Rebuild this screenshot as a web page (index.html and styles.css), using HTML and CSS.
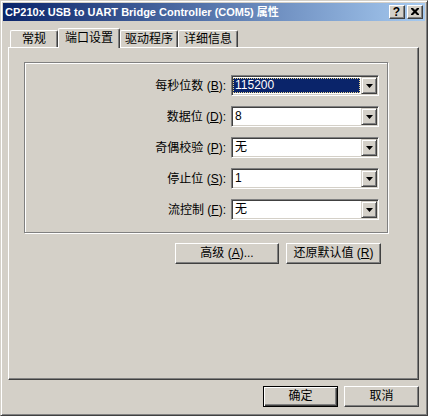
FILE: index.html
```html
<!DOCTYPE html>
<html>
<head>
<meta charset="utf-8">
<link rel="stylesheet" href="styles.css">
</head>
<body>
<div class="window">
  <div class="titlebar">
    <span class="title">CP210x USB to UART Bridge Controller (COM5) 属性</span>
    <div class="caption-btns">
      <span class="cap-btn help">?</span>
      <span class="cap-btn close"><svg width="8" height="7" viewBox="0 0 8 7"><path d="M0 0h2l2 2 2-2h2v1l-2.5 2.5L8 6v1H6L4 5 2 7H0V6l2.5-2.5L0 1z" fill="#000"/></svg></span>
    </div>
  </div>
  <div class="client">
    <div class="tabs">
      <div class="tab t1">常规</div>
      <div class="tab active t2">端口设置</div>
      <div class="tab t3">驱动程序</div>
      <div class="tab t4">详细信息</div>
    </div>
    <div class="panel">
      <div class="group">
        <label class="lbl">每秒位数 (<u>B</u>):</label>
        <div class="combo"><span class="val sel"><span class="focus">115200</span></span><span class="drop"><svg width="7" height="4" viewBox="0 0 7 4"><path d="M0 0h7L3.5 4z" fill="#000"/></svg></span></div>
        <label class="lbl">数据位 (<u>D</u>):</label>
        <div class="combo"><span class="val">8</span><span class="drop"><svg width="7" height="4" viewBox="0 0 7 4"><path d="M0 0h7L3.5 4z" fill="#000"/></svg></span></div>
        <label class="lbl">奇偶校验 (<u>P</u>):</label>
        <div class="combo"><span class="val">无</span><span class="drop"><svg width="7" height="4" viewBox="0 0 7 4"><path d="M0 0h7L3.5 4z" fill="#000"/></svg></span></div>
        <label class="lbl">停止位 (<u>S</u>):</label>
        <div class="combo"><span class="val">1</span><span class="drop"><svg width="7" height="4" viewBox="0 0 7 4"><path d="M0 0h7L3.5 4z" fill="#000"/></svg></span></div>
        <label class="lbl">流控制 (<u>F</u>):</label>
        <div class="combo"><span class="val">无</span><span class="drop"><svg width="7" height="4" viewBox="0 0 7 4"><path d="M0 0h7L3.5 4z" fill="#000"/></svg></span></div>
      </div>
      <div class="panel-btns">
        <button class="btn adv">高级 (<u>A</u>)...</button>
        <button class="btn restore">还原默认值 (<u>R</u>)</button>
      </div>
    </div>
    <div class="dialog-btns">
      <button class="btn default">确定</button>
      <button class="btn">取消</button>
    </div>
  </div>
</div>
</body>
</html>
```
FILE: styles.css
```css
* { box-sizing: border-box; }
html, body { margin: 0; padding: 0; }
body {
  width: 428px;
  height: 416px;
  background: #d4d0c8;
  font-family: "Liberation Sans", "Noto Sans CJK SC", sans-serif;
  font-size: 12px;
  color: #000;
}
.window {
  width: 428px;
  height: 416px;
  background: #d4d0c8;
  border: 1px solid;
  border-color: #d4d0c8 #404040 #404040 #d4d0c8;
  box-shadow: inset 1px 1px 0 #fff, inset -1px -1px 0 #808080;
  padding: 2px;
  display: flex;
  flex-direction: column;
}
.titlebar {
  height: 18px;
  flex: none;
  background: linear-gradient(to right, #0a246a, #a6caf0);
  display: flex;
  align-items: center;
  padding: 0 2px 0 2px;
}
.title {
  flex: 1;
  color: #fff;
  font-weight: bold;
  font-size: 11px;
  font-family: "Liberation Sans", "Noto Sans CJK SC", sans-serif;
  white-space: nowrap;
  overflow: hidden;
  line-height: 18px;
}
.caption-btns {
  display: flex;
  gap: 2px;
}
.cap-btn {
  width: 16px;
  height: 14px;
  background: #d4d0c8;
  border: 1px solid;
  border-color: #fff #404040 #404040 #fff;
  box-shadow: inset -1px -1px 0 #808080;
  display: flex;
  align-items: center;
  justify-content: center;
}
.cap-btn.help {
  font-weight: bold;
  font-size: 12px;
  line-height: 12px;
  font-family: "Liberation Sans", sans-serif;
  padding-right: 1px;
}
.cap-btn.close svg { margin-right: 1px; margin-bottom: 1px; }
.client {
  flex: 1;
  display: flex;
  flex-direction: column;
  padding: 7px 6px 0 5px;
}
.tabs {
  display: flex;
  align-items: flex-end;
  padding-left: 2px;
  height: 19px;
  flex: none;
}
.tab {
  height: 17px;
  background: #d4d0c8;
  border-top: 1px solid #fff;
  border-left: 1px solid #fff;
  border-right: 1px solid #404040;
  border-top-left-radius: 2px;
  border-top-right-radius: 2px;
  box-shadow: inset -1px 0 0 #808080;
  display: flex;
  justify-content: center;
  padding-top: 2px;
  line-height: 13px;
  white-space: nowrap;
}
.t1 { width: 48px; }
.t2 { width: 62px; }
.t3 { width: 58px; }
.t4 { width: 60px; }
.tab.active {
  height: 20px;
  margin-bottom: -1px;
  position: relative;
  z-index: 1;
  padding-top: 3px;
}
.panel {
  height: 333px;
  flex: none;
  border-top: 1px solid #fff;
  border-left: 1px solid #fff;
  border-right: 1px solid #404040;
  border-bottom: 1px solid #404040;
  box-shadow: inset -1px -1px 0 #808080;
  display: flex;
  flex-direction: column;
}
.group {
  margin: 14px 30px 0 15px;
  height: 171px;
  border: 1px solid #808080;
  box-shadow: 1px 1px 0 #fff, inset 1px 1px 0 #fff;
  display: grid;
  grid-template-columns: 1fr 148px;
  grid-auto-rows: 21px;
  row-gap: 10px;
  column-gap: 5px;
  padding: 12px 8px 0 0;
  align-content: start;
}
.lbl {
  justify-self: end;
  align-self: center;
  white-space: nowrap;
  line-height: 14px;
}
.combo {
  height: 21px;
  border: 1px solid;
  border-color: #808080 #fff #fff #808080;
  box-shadow: inset 1px 1px 0 #404040, inset -1px -1px 0 #d4d0c8;
  padding: 1px;
  display: flex;
}
.val {
  flex: 1;
  background: #fff;
  padding-left: 2px;
  line-height: 17px;
  margin-right: 0;
  display: flex;
  align-items: center;
}
.val.sel {
  background: #fff;
  padding: 1px 1px 1px 0;
}
.focus {
  flex: 1;
  height: 15px;
  background: #0a246a;
  color: #fff;
  border: 1px dotted #e8d38c;
  padding-left: 1px;
  line-height: 13px;
}
.drop {
  width: 16px;
  flex: none;
  background: #d4d0c8;
  border: 1px solid;
  border-color: #d4d0c8 #404040 #404040 #d4d0c8;
  box-shadow: inset 1px 1px 0 #fff, inset -1px -1px 0 #808080;
  display: flex;
  align-items: center;
  justify-content: center;
}
.drop svg { margin-left: 0px; }
.panel-btns {
  margin: 10px 30px 0 15px;
  padding-right: 7px;
  display: flex;
  justify-content: flex-end;
  gap: 7px;
}
.btn {
  height: 21px;
  padding: 0;
  margin: 0;
  background: #d4d0c8;
  border: 1px solid;
  border-color: #fff #404040 #404040 #fff;
  box-shadow: inset -1px -1px 0 #808080;
  font-family: "Liberation Sans", "Noto Sans CJK SC", sans-serif;
  font-size: 12px;
  color: #000;
  line-height: 17px;
  white-space: nowrap;
}
.btn.adv { width: 104px; }
.btn.restore { width: 95px; }
.dialog-btns {
  margin-top: 6px;
  display: flex;
  justify-content: flex-end;
  gap: 6px;
}
.dialog-btns .btn { width: 75px; }
.btn.default {
  border-color: #000;
  box-shadow: inset 1px 1px 0 #fff, inset -1px -1px 0 #404040, inset -2px -2px 0 #808080;
}
```
